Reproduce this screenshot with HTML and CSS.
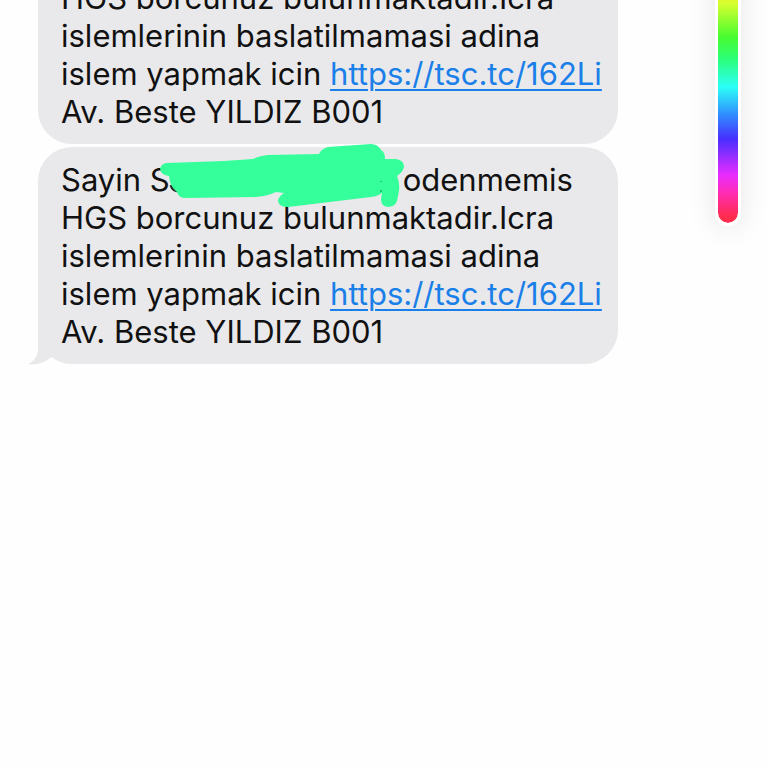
FILE: index.html
```html
<!DOCTYPE html>
<html lang="tr">
<head>
  <meta charset="UTF-8" />
  <meta name="viewport" content="width=device-width, initial-scale=1.0"/>
  <title>Messages</title>
  <link rel="stylesheet" href="styles.css">
</head>
<body>
  <div class="screen">
    <main class="thread">
      <p class="bubble bubble-cut">
        HGS borcunuz bulunmaktadir.Icra<br>
        islemlerinin baslatilmamasi adina<br>
        islem yapmak icin <a href="https://tsc.tc/162Li">https://tsc.tc/162Li</a><br>
        Av. Beste YILDIZ B001
      </p>

      <p class="bubble bubble-last">
        Sayin S<span class="redacted"><svg class="marker" viewBox="160 142 245 66" width="245" height="66" aria-hidden="true">
          <path d="M170 184Q172 190 178 190" fill="none" stroke="#222" stroke-width="3"/>
          <path d="M165 162L223 160L252 158Q258 155 267 154L318 153Q320 148 327 146L370 143Q377 143 380 149Q384 151 384 158L395 158Q403 159 403 166Q402 171 396 175Q400 184 397 195Q396 206 388 206Q380 206 380 198L381 192Q377 195 370 196L287 206Q278 206 277 200Q277 196 283 192L275 191Q267 195 255 196L184 197Q178 197 176 191Q169 186 168 175Q160 174 159 168Q160 163 165 162Z" fill="#34ff9a"/>
          <path d="M380 180v1M380 189v2" stroke="#14844f" stroke-width="1"/>
        </svg></span>odenmemis<br>
        HGS borcunuz bulunmaktadir.Icra<br>
        islemlerinin baslatilmamasi adina<br>
        islem yapmak icin <a href="https://tsc.tc/162Li">https://tsc.tc/162Li</a><br>
        Av. Beste YILDIZ B001
        <svg class="tail" viewBox="0 0 30 32" width="30" height="32" aria-hidden="true">
          <path d="M10 0V18Q9 27 0 31Q12 33 22 25L30 20V0Z" fill="#e9e9eb"/>
        </svg>
      </p>
    </main>

    <!-- Marker colour -->
    <input class="hue" type="range" min="0" max="360" value="150" aria-label="Color">
  </div>
</body>
</html>
```

FILE: styles.css
```css
* { margin: 0; padding: 0; box-sizing: border-box; }
body { background: #fefefe; color: #111; font-family: Inter, "Liberation Sans", sans-serif; }
.screen { position: relative; min-height: 100vh; overflow: hidden; }

/* the thread is scrolled, so the first bubble runs off the top */
.thread { display: flex; flex-direction: column; gap: 3px; margin-top: -21px; padding: 0 38px; }
.bubble { position: relative; width: 100%; max-width: 580px; padding: 14px 0 13px 23px; background: #e9e9eb; border-radius: 34px; font-size: 31px; line-height: 38px; white-space: nowrap; }
.bubble-cut { padding-top: 0; border-top-left-radius: 0; border-top-right-radius: 0; }
.bubble a { color: #1a7fe8; text-decoration: underline; text-decoration-thickness: 2px; text-underline-offset: 4px; }

.redacted { position: relative; display: inline-block; width: 233px; height: 24px; }
.marker { position: absolute; left: -9px; top: -24px; overflow: visible; }
.tail { position: absolute; left: -10px; bottom: -1px; }

.hue { position: absolute; right: 27px; top: -80px; width: 26px; height: 306px; appearance: none; writing-mode: vertical-lr; border: 3px solid #fff; border-radius: 13px; background: linear-gradient(#ff2c4c 0, #ff9a2c 40px, #d8ff2e 80px, #48fc30 114px, #2cff78 136px, #2cfff8 164px, #2f8cff 192px, #482eff 216px, #e82cff 252px, #ff2cb4 270px, #ff2c4c 294px) padding-box; box-shadow: 0 2px 28px rgba(0, 0, 0, 0.1); cursor: pointer; }
.hue::-webkit-slider-thumb { appearance: none; width: 20px; height: 20px; background: transparent; }
```
